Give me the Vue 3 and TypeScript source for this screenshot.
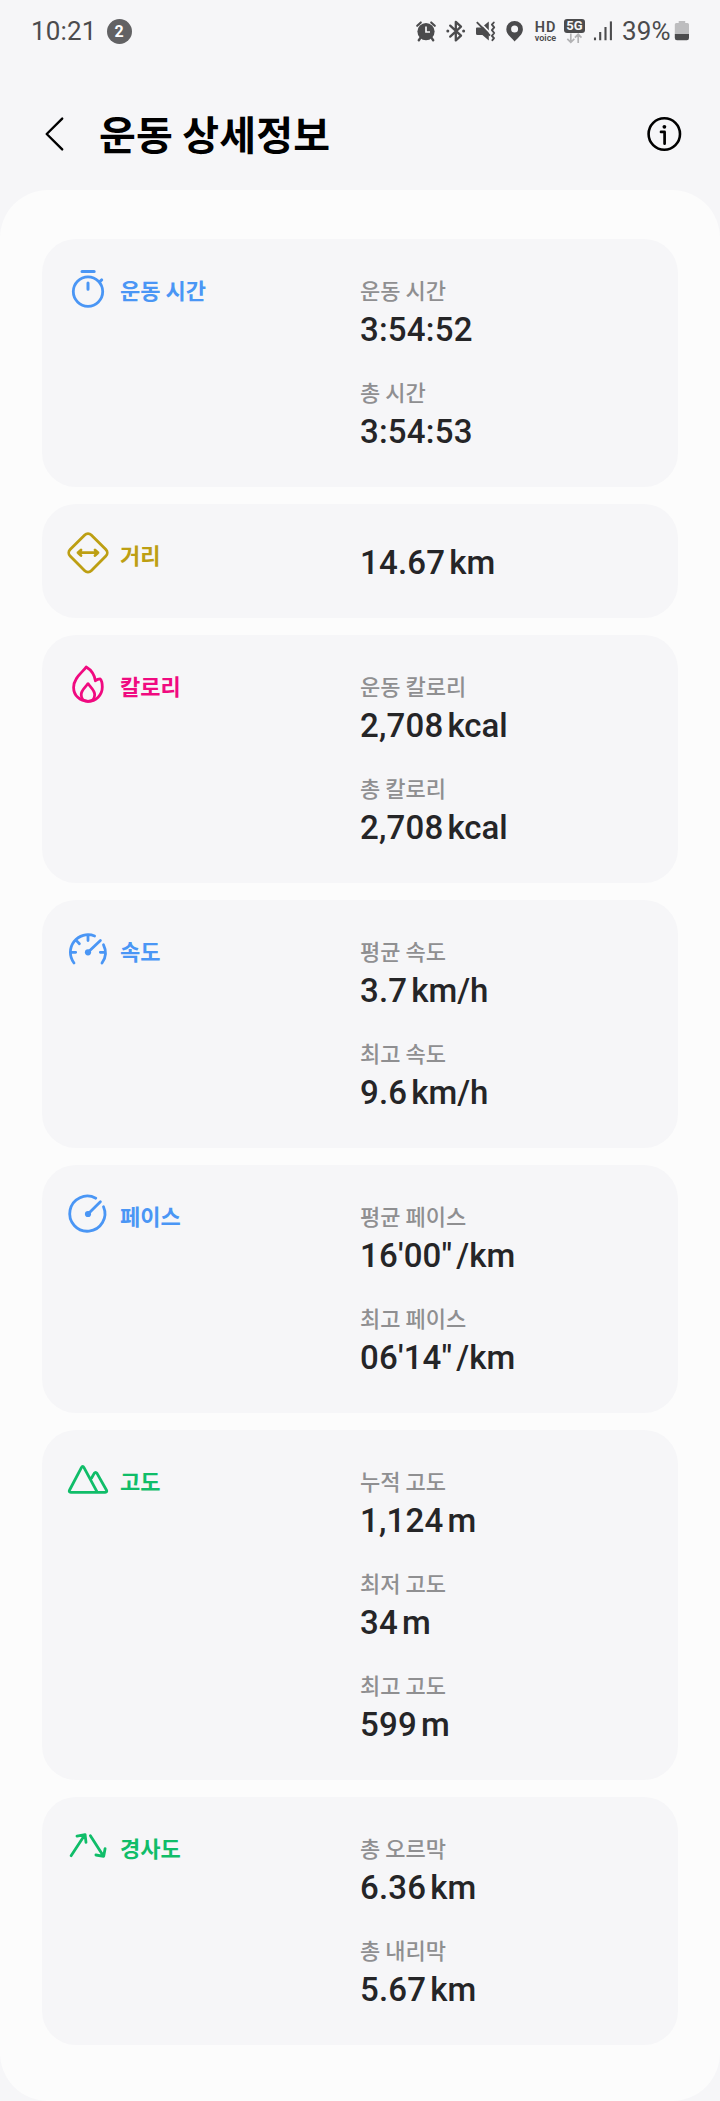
<script setup lang="ts">
type IconName = 'time' | 'distance' | 'calorie' | 'speed' | 'pace' | 'altitude' | 'slope'

interface Metric {
  label?: string
  value: string
  unit?: string
}

interface Section {
  icon: IconName
  title: string
  tone: 'blue' | 'gold' | 'pink' | 'green'
  metrics: Metric[]
}

const sections: Section[] = [
  {
    icon: 'time',
    title: '운동 시간',
    tone: 'blue',
    metrics: [
      { label: '운동 시간', value: '3:54:52' },
      { label: '총 시간', value: '3:54:53' },
    ],
  },
  { icon: 'distance', title: '거리', tone: 'gold', metrics: [{ value: '14.67', unit: 'km' }] },
  {
    icon: 'calorie',
    title: '칼로리',
    tone: 'pink',
    metrics: [
      { label: '운동 칼로리', value: '2,708', unit: 'kcal' },
      { label: '총 칼로리', value: '2,708', unit: 'kcal' },
    ],
  },
  {
    icon: 'speed',
    title: '속도',
    tone: 'blue',
    metrics: [
      { label: '평균 속도', value: '3.7', unit: 'km/h' },
      { label: '최고 속도', value: '9.6', unit: 'km/h' },
    ],
  },
  {
    icon: 'pace',
    title: '페이스',
    tone: 'blue',
    metrics: [
      { label: '평균 페이스', value: '16\'00"', unit: '/km' },
      { label: '최고 페이스', value: '06\'14"', unit: '/km' },
    ],
  },
  {
    icon: 'altitude',
    title: '고도',
    tone: 'green',
    metrics: [
      { label: '누적 고도', value: '1,124', unit: 'm' },
      { label: '최저 고도', value: '34', unit: 'm' },
      { label: '최고 고도', value: '599', unit: 'm' },
    ],
  },
  {
    icon: 'slope',
    title: '경사도',
    tone: 'green',
    metrics: [
      { label: '총 오르막', value: '6.36', unit: 'km' },
      { label: '총 내리막', value: '5.67', unit: 'km' },
    ],
  },
]
</script>

<template>
  <div class="screen">
    <div class="status">
      <div class="status-left">
        <span class="clock">10:21</span>
        <span class="count">2</span>
      </div>
      <div class="status-right">
        <!-- alarm -->
        <svg class="glyph" width="22" height="24" viewBox="0 0 22 24">
          <circle cx="11" cy="12.6" r="8.6" fill="currentColor" />
          <path d="M2.2 6.8L5.8 3.4M19.8 6.8L16.2 3.4" stroke="currentColor" stroke-width="2.1" stroke-linecap="round" />
          <path d="M5.6 18.6L3.8 21.2M16.4 18.6L18.2 21.2" stroke="currentColor" stroke-width="2.4" stroke-linecap="round" />
          <path d="M11 7.6V13H15" fill="none" stroke="#f6f6f8" stroke-width="1.7" />
        </svg>
        <!-- bluetooth -->
        <svg class="glyph" width="22" height="24" viewBox="0 0 22 24">
          <path d="M5.2 6.6L16 16.6L10.8 21.4V2.9L16 7.6L5.2 17.6" fill="none" stroke="currentColor" stroke-width="2.3" stroke-linejoin="round" stroke-linecap="round" />
          <circle cx="2.8" cy="12.1" r="1.5" fill="currentColor" />
          <circle cx="18.6" cy="12.1" r="1.5" fill="currentColor" />
        </svg>
        <!-- muted, vibrate -->
        <svg class="glyph" width="22" height="24" viewBox="0 0 22 24">
          <path d="M2 8.4H6.5L13.8 2.4V21.4L7.4 16H2.4Q1 16 1 14.5V9.6Q1 8.4 2 8.4Z" fill="currentColor" />
          <path d="M3.2 1.7L15.6 14.4" stroke="#f6f6f8" stroke-width="1.7" />
          <path d="M1.8 3.1L15 16.6" stroke="currentColor" stroke-width="1.9" />
          <path d="M18.8 3.5L16.9 5.7L19.2 8.4L16.9 11.2L19.2 14L16.9 16.8L19 19.2L17.4 21.2" fill="none" stroke="currentColor" stroke-width="1.9" stroke-linejoin="round" stroke-linecap="round" />
        </svg>
        <!-- location -->
        <svg class="glyph" width="22" height="24" viewBox="0 0 22 24">
          <path fill-rule="evenodd" d="M10.6 2A8.2 8.2 0 0 0 2.3 10.2C2.3 15.4 7.2 18.6 10.6 22.4C14 18.6 18.9 15.4 18.9 10.2A8.2 8.2 0 0 0 10.6 2ZM10.6 6.5A3.5 3.5 0 1 1 10.6 13.5A3.5 3.5 0 1 1 10.6 6.5Z" fill="currentColor" />
        </svg>
        <div class="hd"><span class="hd-top">HD</span><span class="hd-bottom">voice</span></div>
        <div class="net">
          <span class="net-tag">5G</span>
          <svg width="21" height="11" viewBox="0 0 21 11">
            <path d="M6.8 0.5V9M3.3 5.8L6.8 9.3L10.3 5.8M14.2 10V1.3M10.9 4.7L14.2 1.3L17.5 4.7" fill="none" stroke="#b3b3b5" stroke-width="1.7" />
          </svg>
        </div>
        <!-- signal -->
        <svg class="glyph" width="22" height="24" viewBox="0 0 22 24">
          <path d="M2 18.5V21.2M7.2 13V21.2M12.5 8V21.2" stroke="currentColor" stroke-width="2.1" />
          <path d="M17.9 2.4V21.2" stroke="currentColor" stroke-width="2.1" />
        </svg>
        <span class="percent">39%</span>
        <svg class="glyph" width="16" height="24" viewBox="0 0 16 24">
          <path d="M4.7 2H11.2V4H13.5Q15 4 15 5.5V15H0.8V5.5Q0.8 4 2.3 4H4.7Z" fill="#bdbdbf" />
          <path d="M0.8 15H15V19Q15 21.2 12.8 21.2H3Q0.8 21.2 0.8 19Z" fill="currentColor" />
        </svg>
      </div>
    </div>

    <header class="appbar">
      <svg class="back" width="24" height="40" viewBox="0 0 24 40">
        <path d="M20.2 4.6L4.7 20L20.2 35.4" fill="none" stroke="#000" stroke-width="2.4" stroke-linecap="round" stroke-linejoin="round" />
      </svg>
      <h1>운동 상세정보</h1>
      <svg class="info" width="40" height="40" viewBox="0 0 40 40">
        <circle cx="20.3" cy="20" r="15.7" fill="none" stroke="#000" stroke-width="2.6" />
        <circle cx="20.4" cy="12.8" r="1.9" />
        <path d="M17 17.9H20.6V29.7" fill="none" stroke="#000" stroke-width="2.7" stroke-linecap="round" stroke-linejoin="round" />
      </svg>
    </header>

    <main class="sheet">
      <section v-for="s in sections" :key="s.icon" class="card">
        <div class="heading" :class="s.tone">
          <svg class="icon" width="42" height="42" viewBox="0 0 42 42">
            <template v-if="s.icon === 'time'">
              <circle cx="21" cy="24.6" r="14.7" />
              <path d="M15 4.4H27.2M21 16V22.2M32.6 14.8L34.7 12.9" stroke-width="3" />
            </template>
            <template v-else-if="s.icon === 'distance'">
              <rect x="6.05" y="5.85" width="29.9" height="29.9" rx="4.6" transform="rotate(45 21 20.8)" />
              <path d="M11 20.7H31M14 17.9L11 20.7L14 23.5M28 17.9L31 20.7L28 23.5" />
            </template>
            <template v-else-if="s.icon === 'calorie'">
              <path d="M19.2 4C16 9 6.6 14.5 6.6 24.4C6.6 32.4 13 38.3 21 38.3S35.3 32 35.3 24C35.3 20 34.6 17.4 33.2 15.9C31.2 15.9 29.7 16.6 28.4 17.8C27.5 12 24.3 7 19.2 4Z" />
              <path d="M21 20.6C19 23.8 14.2 26.8 14.2 31.7C14.2 35.5 17 38.3 21 38.3S27.7 35.5 27.7 31.7C27.7 27 23 23.8 21 20.6Z" />
            </template>
            <template v-else-if="s.icon === 'speed'">
              <path d="M7 35A17.6 17.6 0 0 1 27.6 8M36.5 16.8A17.6 17.6 0 0 1 35 35M21 24.3L33.4 12.4M4 24.3H8.7M33.3 24.3H38M21 7.2V12.5M9.2 12.4L12.4 15.7" />
              <circle class="dot" cx="21" cy="24.3" r="3.1" />
            </template>
            <template v-else-if="s.icon === 'pace'">
              <path d="M36.5 13.7A17.6 17.6 0 1 1 28.8 5.2M21 21L33.4 8.7" />
              <circle class="dot" cx="21" cy="21" r="3.1" />
            </template>
            <template v-else-if="s.icon === 'altitude'">
              <path d="M24.6 20L27.2 15.4Q28.6 13.3 30 15.4L39.4 32Q40.6 34.3 38.2 34.3H3.8Q1.4 34.3 2.6 32L14.4 9.6Q15.7 7.2 17 9.6L29.8 33.4" />
            </template>
            <template v-else>
              <path d="M4.1 30.7L17.7 10M10 11.2L18.1 9.6L19 17.4M23.4 10.8L36.4 31M28.9 30L36.7 31.3L38.1 23.6" />
            </template>
          </svg>
          <h2>{{ s.title }}</h2>
        </div>
        <div class="metrics">
          <div v-for="(m, i) in s.metrics" :key="i" class="metric" :class="{ bare: !m.label }">
            <div v-if="m.label" class="label">{{ m.label }}</div>
            <div class="value"><span>{{ m.value }}</span><span v-if="m.unit" class="unit">{{ m.unit }}</span></div>
          </div>
        </div>
      </section>
    </main>
  </div>
</template>

<style>
body {
  margin: 0;
  background: #f6f6f8;
}
</style>

<style scoped>
.screen {
  width: 720px;
  height: 2101px;
  display: flex;
  flex-direction: column;
  background: #f6f6f8;
  font-family: Roboto, 'Noto Sans CJK KR', sans-serif;
}

.status {
  height: 62px;
  box-sizing: border-box;
  padding-left: 31px;
  display: flex;
  align-items: center;
  color: #4b4b4d;
  flex: none;
}

.status-left {
  width: 384px;
  display: flex;
  align-items: center;
  gap: 10px;
}

.clock,
.percent {
  font-size: 26px;
  line-height: 30px;
  letter-spacing: 0.15px;
}

.count {
  width: 25px;
  height: 25px;
  border-radius: 50%;
  background: #626264;
  color: #fff;
  font-size: 16px;
  font-weight: 700;
  line-height: 25px;
  text-align: center;
}

.status-right {
  display: grid;
  grid-template-columns: 30px 30px 29px 30px 30px 29px 29px 52px 16px;
  align-items: center;
}

.glyph {
  display: block;
}

.hd {
  display: flex;
  flex-direction: column;
  align-items: center;
  width: 23px;
  padding-top: 1px;
}

.hd-top {
  font-size: 14.5px;
  font-weight: 600;
  line-height: 13px;
  letter-spacing: 0.9px;
}

.hd-bottom {
  font-size: 9px;
  font-weight: 600;
  line-height: 9px;
}

.net {
  width: 21px;
}

.net-tag {
  display: block;
  height: 14px;
  border-radius: 3px;
  background: #4b4b4d;
  color: #f6f6f8;
  font-size: 13px;
  font-weight: 700;
  line-height: 14px;
  text-align: center;
}

.net svg {
  display: block;
}

.appbar {
  height: 128px;
  box-sizing: border-box;
  padding: 0 36px 0 42px;
  display: flex;
  align-items: center;
  flex: none;
}

.back,
.info {
  flex: none;
  margin-top: 16px;
}

h1 {
  margin: 14px 0 0 33px;
  flex: 1;
  font-family: 'Noto Sans CJK KR', sans-serif;
  font-size: 40px;
  line-height: 56px;
  font-weight: 700;
  letter-spacing: 0.2px;
  color: #000;
}

.sheet {
  flex: 1;
  box-sizing: border-box;
  padding: 49px 42px 0;
  display: flex;
  flex-direction: column;
  gap: 17px;
  border-radius: 48px;
  background: #fcfcfc;
}

.card {
  box-sizing: border-box;
  padding: 34px 24px;
  display: grid;
  grid-template-columns: 294px 1fr;
  border-radius: 34px;
  background: #f6f6f8;
}

.heading {
  height: 42px;
  margin-top: -6px;
  display: flex;
  align-items: center;
}

.blue {
  color: #4a96f5;
}

.gold {
  color: #bd9f13;
}

.pink {
  color: #f00a80;
}

.green {
  color: #10bd69;
}

.icon {
  margin-left: 1px;
  fill: none;
  stroke: currentColor;
  stroke-width: 2.8;
  stroke-linecap: round;
  stroke-linejoin: round;
  overflow: visible;
}

.dot {
  fill: currentColor;
  stroke: none;
}

h2 {
  margin: 2px 0 0 11px;
  font-family: 'Noto Sans CJK KR', sans-serif;
  font-size: 22px;
  line-height: 32px;
  font-weight: 700;
}

.metrics {
  display: flex;
  flex-direction: column;
  gap: 24px;
}

.label {
  padding-bottom: 2px;
  font-family: 'Noto Sans CJK KR', sans-serif;
  font-size: 22px;
  line-height: 33px;
  font-weight: 500;
  color: #8f8f91;
}

.value {
  display: flex;
  gap: 4px;
  font-size: 33px;
  line-height: 43px;
  font-weight: 500;
  color: #252527;
}

.value span:first-child {
  letter-spacing: 0.2px;
}

.bare {
  padding-top: 3px;
}
</style>
